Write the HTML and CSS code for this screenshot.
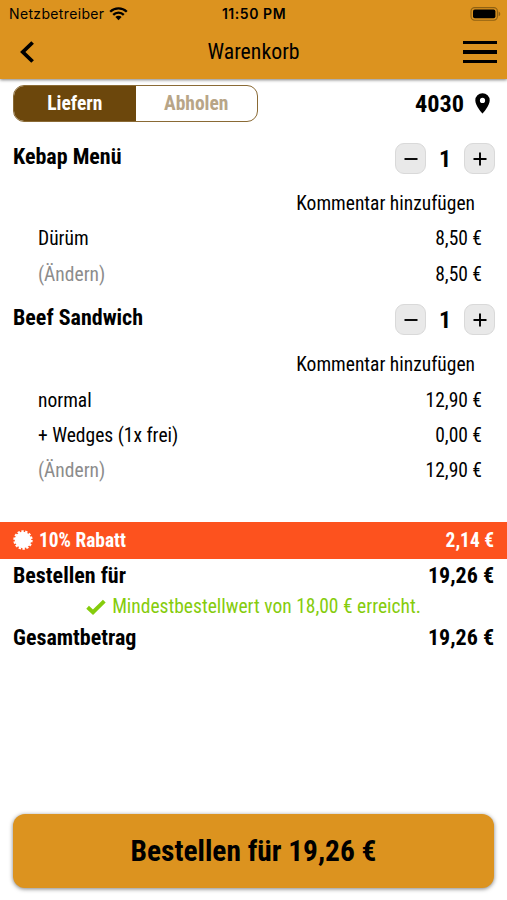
FILE: index.html
```html
<!DOCTYPE html>
<html lang="de">
<head>
    <meta charset="UTF-8">
    <meta name="viewport" content="width=device-width, initial-scale=1.0">
    <title>Warenkorb</title>
    <link rel="stylesheet" href="styles.css">
</head>
<body>
    <header class="header">
        <div class="status">
            <div class="carrier">
                <span>Netzbetreiber</span>
                <svg width="19" height="14" viewBox="0 0 19 14">
                    <g fill="none" stroke="#000" stroke-width="2.3">
                        <path d="M1.2 4.7a11.8 11.8 0 0 1 16.6 0"/>
                        <path d="M4.2 7.9a7.5 7.5 0 0 1 10.6 0"/>
                    </g>
                    <path d="M6.4 10.1a4.4 4.4 0 0 1 6.2 0L9.5 13.3z"/>
                </svg>
            </div>
            <span class="time">11:50 PM</span>
            <svg class="battery" width="31" height="14" viewBox="0 0 31 14">
                <rect x="1" y="0.6" width="26.4" height="12.6" rx="3.6" fill="none" stroke="#8f6113" stroke-width="1.1"/>
                <rect x="3" y="2.6" width="22.4" height="8.6" rx="1.8"/>
                <path d="M28.6 4.6v4.6q1.7-.7 1.7-2.3t-1.7-2.3z" fill="#8f6113"/>
            </svg>
        </div>
        <div class="nav">
            <svg width="15" height="22" viewBox="0 0 15 22">
                <path d="M12.6 1.5L2.8 11l9.8 9.5" fill="none" stroke="#000" stroke-width="3.8"/>
            </svg>
            <h1>Warenkorb</h1>
            <div class="menu"><i></i><i></i><i></i></div>
        </div>
    </header>

    <div class="delivery">
        <div class="toggle">
            <span class="active">Liefern</span>
            <span>Abholen</span>
        </div>
        <div class="plz">
            <span>4030</span>
            <svg width="15" height="21" viewBox="0 0 15 21">
                <path fill-rule="evenodd" d="M7.5.2A7.2 7.2 0 0 0 .3 7.4C.3 12.6 7.5 20.6 7.5 20.6S14.7 12.6 14.7 7.4A7.2 7.2 0 0 0 7.5.2zM7.5 4.8a2.6 2.6 0 1 1 0 5.2a2.6 2.6 0 0 1 0-5.2z"/>
            </svg>
        </div>
    </div>

    <section class="item">
        <div class="item-head">
            <h2>Kebap Menü</h2>
            <div class="stepper">
                <button><svg width="14" height="14" viewBox="0 0 14 14"><path d="M.5 7h13"/></svg></button>
                <b>1</b>
                <button><svg width="14" height="14" viewBox="0 0 14 14"><path d="M.5 7h13M7 .5v13"/></svg></button>
            </div>
        </div>
        <div class="comment"><span>Kommentar hinzufügen</span></div>
        <div class="row"><span>Dürüm</span><span>8,50 €</span></div>
        <div class="row"><span class="edit">(Ändern)</span><span>8,50 €</span></div>
    </section>

    <section class="item">
        <div class="item-head">
            <h2>Beef Sandwich</h2>
            <div class="stepper">
                <button><svg width="14" height="14" viewBox="0 0 14 14"><path d="M.5 7h13"/></svg></button>
                <b>1</b>
                <button><svg width="14" height="14" viewBox="0 0 14 14"><path d="M.5 7h13M7 .5v13"/></svg></button>
            </div>
        </div>
        <div class="comment"><span>Kommentar hinzufügen</span></div>
        <div class="row"><span>normal</span><span>12,90 €</span></div>
        <div class="row"><span>+ Wedges (1x frei)</span><span>0,00 €</span></div>
        <div class="row"><span class="edit">(Ändern)</span><span>12,90 €</span></div>
    </section>

    <div class="rabatt">
        <svg width="20" height="20" viewBox="-10 -10 20 20">
            <circle r="8.3" fill="#fff"/>
            <circle r="8.7" fill="none" stroke="#fff" stroke-width="2" stroke-dasharray="2.4 1.505"/>
        </svg>
        <span>10% Rabatt</span>
        <span class="price">2,14 €</span>
    </div>

    <div class="total"><span>Bestellen für</span><span>19,26 €</span></div>
    <div class="minimum">
        <svg width="20" height="16" viewBox="0 0 20 16">
            <path d="M1.6 8.2l5.4 5L18.3 2.2" fill="none" stroke="#85cc0c" stroke-width="3.9"/>
        </svg>
        <span>Mindestbestellwert von 18,00 € erreicht.</span>
    </div>
    <div class="total"><span>Gesamtbetrag</span><span>19,26 €</span></div>

    <button class="order">Bestellen für 19,26 €</button>
</body>
</html>
```

FILE: styles.css
```css
* {
    box-sizing: border-box;
}
body {
    margin: 0;
    height: 900px;
    display: flex;
    flex-direction: column;
    background-color: #fff;
    color: #000;
    font-family: "Roboto Condensed", Roboto, sans-serif;
    font-stretch: 75%;
    font-size: 19.5px;
    overflow: hidden;
}
h1, h2 {
    margin: 0;
}
button {
    padding: 0;
    font-family: inherit;
    font-stretch: inherit;
    color: #000;
    border: 0;
}
svg {
    display: block;
    flex: none;
}
.header {
    height: 79px;
    flex: none;
    background-color: #dc931f;
    box-shadow: 0 1px 3px rgba(0, 0, 0, 0.5);
}
.status {
    display: grid;
    grid-template-columns: 1fr auto 1fr;
    align-items: center;
    height: 27px;
    padding: 0 6px 0 9px;
    font-family: Inter, sans-serif;
    font-stretch: normal;
    font-size: 14px;
    letter-spacing: 0.35px;
}
.carrier {
    display: flex;
    align-items: center;
    gap: 5px;
}
.time {
    margin-right: 2px;
    font-weight: 600;
    letter-spacing: 0.55px;
}
.battery {
    justify-self: end;
}
.nav {
    display: grid;
    grid-template-columns: 1fr auto 1fr;
    align-items: center;
    height: 50px;
    padding: 0 10px 0 20px;
}
.nav h1 {
    margin-right: 10px;
    font-size: 21.8px;
    font-weight: 400;
    line-height: 26px;
}
.menu {
    justify-self: end;
    display: flex;
    flex-direction: column;
    gap: 6px;
    width: 34px;
}
.menu i {
    height: 3.5px;
    background-color: #000;
}
.delivery {
    display: flex;
    justify-content: space-between;
    align-items: center;
    height: 37px;
    margin: 6px 17px 21px 13px;
}
.toggle {
    display: flex;
    width: 245px;
    height: 37px;
    border: 1px solid #8a6a35;
    border-radius: 11px;
    overflow: hidden;
    font-weight: 700;
    line-height: 35px;
    text-align: center;
    color: #b8a587;
}
.toggle span {
    flex: 1;
}
.toggle .active {
    background-color: #6c470c;
    color: #fff;
}
.plz {
    display: flex;
    align-items: center;
    gap: 11px;
    font-size: 24.3px;
    font-weight: 700;
}
.item {
    flex: none;
    margin-bottom: 12px;
}
.item-head {
    display: flex;
    justify-content: space-between;
    height: 43px;
    padding: 0 12px 0 13px;
}
.item-head h2 {
    font-size: 22px;
    line-height: 28px;
}
.stepper {
    display: flex;
    align-items: center;
    height: 31px;
}
.stepper button {
    display: flex;
    justify-content: center;
    align-items: center;
    width: 31px;
    height: 31px;
    background-color: #e9e9e9;
    border: 1px solid #d9d9d9;
    border-radius: 9px;
}
.stepper path {
    stroke: #000;
    stroke-width: 1.9;
}
.stepper b {
    width: 38px;
    font-size: 24px;
    text-align: center;
}
.comment {
    height: 35.4px;
    padding-right: 32px;
    line-height: 35.4px;
    text-align: right;
}
.row {
    display: flex;
    justify-content: space-between;
    height: 35.4px;
    padding: 0 25px 0 38px;
    line-height: 36px;
}
.edit {
    color: #8c8c8c;
}
.rabatt {
    display: flex;
    align-items: center;
    gap: 6px;
    flex: none;
    height: 37px;
    margin-top: 21px;
    padding: 0 13px;
    background-color: #fd521e;
    color: #fff;
    font-size: 19.4px;
    font-weight: 700;
    line-height: 37px;
}
.rabatt .price {
    margin-left: auto;
}
.total {
    display: flex;
    justify-content: space-between;
    flex: none;
    height: 32px;
    padding: 0 13px;
    font-size: 22px;
    font-weight: 700;
    line-height: 33px;
}
.minimum {
    display: flex;
    justify-content: center;
    align-items: center;
    gap: 6px;
    flex: none;
    height: 30px;
    padding-top: 2px;
    color: #85cc0c;
}
.order {
    flex: none;
    height: 74px;
    margin: auto 13px 12px;
    background-color: #dc931f;
    border-radius: 12px;
    box-shadow: 0 1px 4px rgba(0, 0, 0, 0.5);
    font-size: 29.4px;
    font-weight: 700;
}
```
